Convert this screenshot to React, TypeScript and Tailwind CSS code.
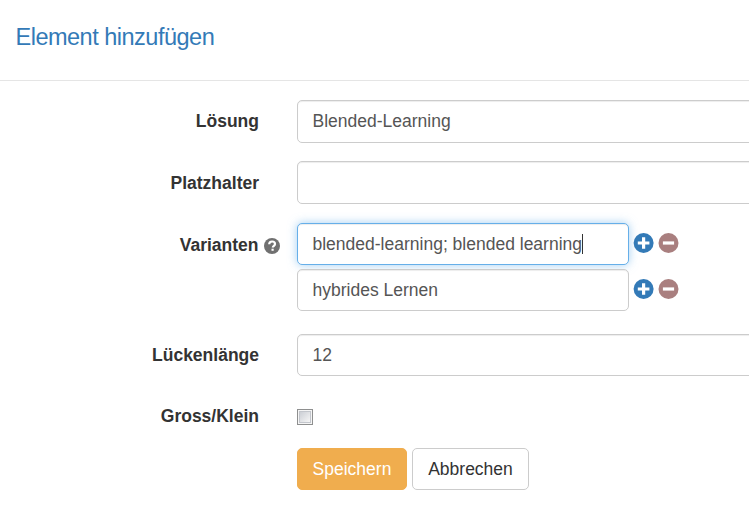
import type { ReactNode } from 'react';

function Row({ label, className, labelClassName = 'pt-[9px]', children }: { label: string; className: string; labelClassName?: string; children: ReactNode }) {
  return (
    <div className={`flex items-start ${className}`}>
      <div className={`mr-[38px] w-[259px] shrink-0 text-right font-bold leading-[25px] text-[#333333] ${labelClassName}`}>{label}</div>
      {children}
    </div>
  );
}

function Field({ value = '', className }: { value?: string; className: string }) {
  return (
    <input
      readOnly
      value={value}
      className={`block shrink-0 rounded-[5px] border border-[#cccccc] bg-white px-[14.5px] text-[#555555] shadow-[inset_0_1px_1px_rgba(0,0,0,0.075)] outline-none ${className}`}
    />
  );
}

function AddRemove() {
  return (
    <div className="ml-[4px] flex gap-px">
      <svg width="24" height="20" viewBox="0 0 24 20" aria-label="Hinzufügen">
        <circle cx="10.6" cy="10" r="10" fill="#337ab7" />
        <path d="M9 4.2h3.2v4.2h4.2v3.2h-4.2v4.2H9v-4.2H4.8V8.4H9z" fill="#fff" />
      </svg>
      <svg width="24" height="20" viewBox="0 0 24 20" aria-label="Entfernen">
        <circle cx="10.5" cy="10" r="10" fill="#a97f7f" />
        <path d="M4.9 8.4h11.2v3.2H4.9z" fill="#fff" />
      </svg>
    </div>
  );
}

export default function App() {
  return (
    <main className="h-[512px] w-[749px] overflow-hidden bg-white font-['Liberation_Sans',Arial,sans-serif] text-[17.5px]">
      <header className="h-[81px] border-b border-[#e5e5e5] pl-[15.5px] pt-[21px]">
        <h1 className="text-[23.5px] leading-8 tracking-[-0.5px] text-[#337ab7]">Element hinzufügen</h1>
      </header>
      <form className="pt-[19px]">
        <Row label="Lösung" className="h-[61px]">
          <Field value="Blended-Learning" className="h-[43px] w-[480px]" />
        </Row>
        <Row label="Platzhalter" className="h-[62px]" labelClassName="pt-[10px]">
          <Field className="h-[43px] w-[480px]" />
        </Row>
        <div className="flex h-[111px] items-start">
          <div className="mr-[17px] flex w-[280px] shrink-0 items-center justify-end gap-[5.5px] pt-[10px] font-bold leading-[25px] text-[#333333]">
            <span>Varianten</span>
            <svg width="16" height="16" viewBox="0 0 16 16" aria-label="Hilfe">
              <circle cx="8" cy="8" r="8" fill="#707070" />
              <path d="M5.2 6.3C5.2 4.5 6.3 3.5 8.1 3.5s2.9 1 2.9 2.5c0 1.9-2.2 1.9-2.2 3.6" fill="none" stroke="#fff" strokeWidth="2.2" />
              <path d="M7.5 10.7h2.2v2.1H7.5z" fill="#fff" />
            </svg>
          </div>
          <div className="flex flex-col gap-1">
            <div className="flex items-start">
              <div className="flex h-[42px] w-[332px] items-center rounded-[5px] border border-[#66afe9] bg-white px-[14.5px] text-[#555555] shadow-[inset_0_1px_1px_rgba(0,0,0,0.075),0_0_10px_rgba(102,175,233,0.6)]">
                <span className="whitespace-nowrap">blended-learning; blended learning</span>
                <span className="h-5 w-px bg-[#333333]" />
              </div>
              <div className="pt-[10px]"><AddRemove /></div>
            </div>
            <div className="flex items-start">
              <Field value="hybrides Lernen" className="h-[42px] w-[332px]" />
              <div className="pt-[10px]"><AddRemove /></div>
            </div>
          </div>
        </div>
        <Row label="Lückenlänge" className="h-[61px]">
          <Field value="12" className="h-[42px] w-[480px]" />
        </Row>
        <Row label="Gross/Klein" className="h-[53px]">
          <span role="checkbox" aria-checked="false" className="mt-[14px] h-4 w-4 border border-[#8e8f8f] bg-[#f5f5f5] p-px">
            <span className="block h-full w-full border border-[#c3c6cc] bg-linear-to-br from-[#cccfd5] to-[#f6f6f6]" />
          </span>
        </Row>
        <div className="flex gap-[5px] pl-[297px]">
          <button type="button" className="h-[42px] w-[110px] rounded-[5px] border border-[#f0ad4e] bg-[#f0ad4e] text-white">Speichern</button>
          <button type="button" className="h-[42px] w-[117px] rounded-[5px] border border-[#cccccc] bg-white text-[#333333]">Abbrechen</button>
        </div>
      </form>
    </main>
  );
}
